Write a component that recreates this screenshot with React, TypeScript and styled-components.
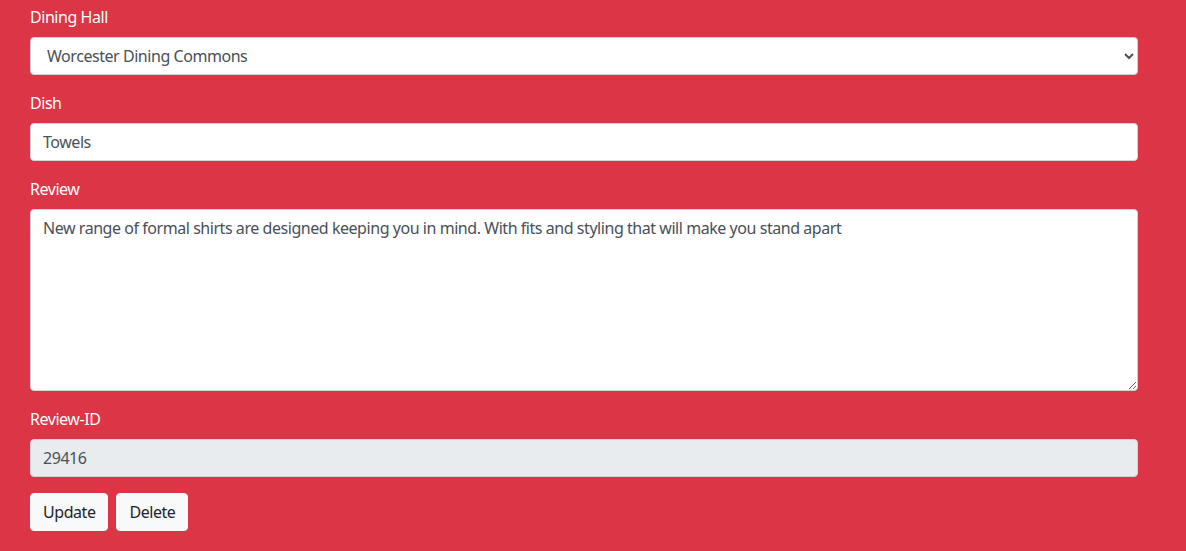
import React from "react";
import styled, { createGlobalStyle } from "styled-components";

const Global = createGlobalStyle`
  html, body { margin: 0; padding: 0; background: #dc3545; }
  body { font-family: "Segoe UI", "Noto Sans", "Liberation Sans", sans-serif; font-size: 16px; line-height: 1.5; color: #212529; letter-spacing: -0.45px; }
  * { box-sizing: border-box; }
`;

const Page = styled.div`
  background: #dc3545;
  min-height: 551px;
  padding: 5px 48px 20px 30px;
`;

const Group = styled.div`
  margin-bottom: 16px;
`;

const Label = styled.label`
  display: block;
  color: #fff;
  margin-bottom: 8px;
  line-height: 24px;
`;

const fieldBase = `
  display: block;
  width: 100%;
  font-family: inherit;
  font-size: 16px;
  letter-spacing: -0.45px;
  line-height: 24px;
  color: #495057;
  background: #fff;
  border: 1px solid #ced4da;
  border-radius: 4px;
  padding: 6px 12px;
  outline: none;
`;

const Select = styled.select`
  ${fieldBase}
  height: 38px;
  padding: 6px 8px 6px 12px;
`;

const Input = styled.input<{ $readOnly?: boolean }>`
  ${fieldBase}
  height: 38px;
  background: ${(p) => (p.$readOnly ? "#e9ecef" : "#fff")};
`;

const TextArea = styled.textarea`
  ${fieldBase}
  height: 182px;
  resize: vertical;
`;

const Buttons = styled.div`
  display: flex;
  gap: 8px;
`;

const Button = styled.button`
  font-family: inherit;
  font-size: 16px;
  letter-spacing: -0.45px;
  line-height: 24px;
  color: #212529;
  background: #f8f9fa;
  border: 1px solid #f8f9fa;
  border-radius: 4px;
  padding: 6px 12px;
  height: 38px;
  cursor: pointer;
`;

export default function App() {
  return (
    <>
      <Global />
      <Page>
        <Group>
          <Label>Dining Hall</Label>
          <Select defaultValue="Worcester Dining Commons">
            <option>Worcester Dining Commons</option>
            <option>Franklin Dining Commons</option>
            <option>Hampshire Dining Commons</option>
            <option>Berkshire Dining Commons</option>
          </Select>
        </Group>
        <Group>
          <Label>Dish</Label>
          <Input defaultValue="Towels" />
        </Group>
        <Group>
          <Label>Review</Label>
          <TextArea
            rows={7}
            defaultValue="New range of formal shirts are designed keeping you in mind. With fits and styling that will make you stand apart"
          />
        </Group>
        <Group>
          <Label>Review-ID</Label>
          <Input $readOnly readOnly value="29416" />
        </Group>
        <Buttons>
          <Button>Update</Button>
          <Button>Delete</Button>
        </Buttons>
      </Page>
    </>
  );
}
